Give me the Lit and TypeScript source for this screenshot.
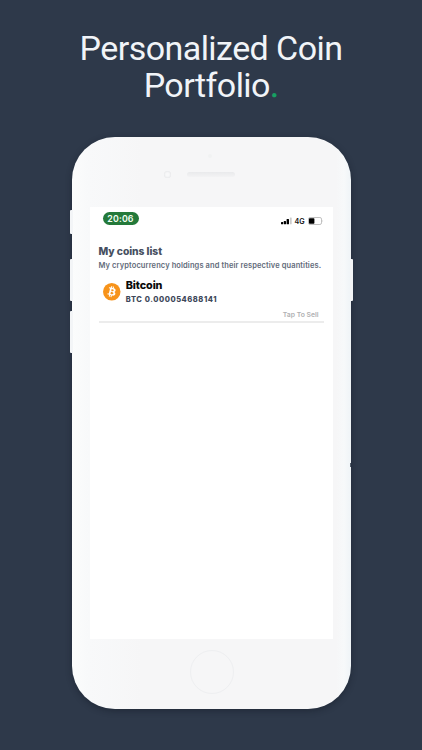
import { LitElement, html, css } from "lit";
import { customElement } from "lit/decorators.js";

@customElement("status-bar")
class StatusBar extends LitElement {
  static styles = css`
    :host { display: flex; justify-content: space-between; align-items: flex-start; padding: 5px 9px 0 13px; height: 14px; }
    .time { width: 36px; height: 13px; border-radius: 7px; background: #24793a; color: #f4fff5; font-size: 8.8px; line-height: 13px; font-weight: 600; text-align: center; letter-spacing: 0.15px; }
    .right { display: flex; align-items: center; height: 10px; margin-top: 4px; }
    .net { font-size: 7.2px; line-height: 10px; font-weight: 600; color: #111; margin: 0 2.5px 1px 3px; width: 10.5px; position: relative; top: 1px; }
    svg { display: block; }
  `;
  render() {
    return html`
      <div class="time">20:06</div>
      <div class="right">
        <svg width="11" height="8" viewBox="0 0 11 8">
          <rect x="0" y="4.9" width="2.2" height="2.3" rx=".5" fill="#000" />
          <rect x="2.8" y="3.9" width="2.2" height="3.3" rx=".5" fill="#000" />
          <rect x="5.6" y="2.1" width="2.4" height="5.1" rx=".5" fill="#000" />
          <rect x="8.9" y=".4" width="1.8" height="6.8" rx=".5" fill="#ccc" />
        </svg>
        <span class="net">4G</span>
        <svg width="16" height="8" viewBox="0 0 16 8">
          <rect x=".5" y=".5" width="13" height="7" rx="1.6" fill="#fff" stroke="#b0b0b0" stroke-width=".8" />
          <rect x="1" y="1.2" width="5.4" height="5.6" rx=".7" fill="#000" />
          <path d="M14.6 2.8q1 1.2 0 2.4z" fill="#aaa" />
        </svg>
      </div>`;
  }
}

@customElement("coin-row")
class CoinRow extends LitElement {
  static styles = css`
    :host { display: block; height: 50px; border-bottom: 2px solid #ececec; }
    .main { display: flex; padding: 8px 0 0 4px; height: 27px; }
    .logo { display: block; margin: 4px 5px 0 0.8px; flex: none; }
    .name { font-size: 10.8px; line-height: 14px; font-weight: 800; color: #0a0a0a; letter-spacing: -0.1px; }
    .qty { font-size: 7.5px; line-height: 12px; font-weight: 800; color: #3d4759; letter-spacing: 0.56px; white-space: nowrap; margin-top: 1px; }
    .sell { text-align: right; padding-right: 5px; font-size: 6.8px; line-height: 10px; font-weight: 600; color: #b0b0b2; margin-top: 4px; }
  `;
  render() {
    return html`
      <div class="main">
        <svg class="logo" width="17.5" height="17.5" viewBox="0 0 64 64">
          <circle cx="32" cy="32" r="32" fill="#f7931a" />
          <path fill="#fff" d="M46.1 27.4c.6-4.3-2.6-6.5-7-8l1.4-5.8-3.5-.9-1.4 5.6-2.8-.7 1.4-5.6-3.5-.9-1.4 5.8-7.1-1.8-.9 3.8s2.6.6 2.5.6c1.4.4 1.7 1.3 1.6 2l-3.9 15.8c-.2.4-.6 1.1-1.6.8l-2.6-.6-1.7 4 6.9 1.8-1.5 5.9 3.5.9 1.4-5.8 2.8.7-1.4 5.8 3.5.9 1.5-5.9c6 1.1 10.5.7 12.4-4.7 1.5-4.4-.1-6.9-3.2-8.5 2.3-.5 4-2 4.6-5.2zm-8 11.3c-1.1 4.4-8.5 2-10.9 1.4l1.9-7.8c2.4.6 10.1 1.8 9 6.4zm1.1-11.3c-1 4-7.2 2-9.1 1.5l1.7-7.1c2 .5 8.5 1.4 7.4 5.6z" />
        </svg>
        <div>
          <div class="name">Bitcoin</div>
          <div class="qty">BTC 0.000054688141</div>
        </div>
      </div>
      <div class="sell">Tap To Sell</div>`;
  }
}

@customElement("app-root")
class AppRoot extends LitElement {
  static styles = css`
    :host { display: flex; flex-direction: column; align-items: center; box-sizing: border-box; width: 422px; height: 750px; padding-top: 30px; overflow: hidden; background: #2e394a; font-family: Inter, "Liberation Sans", sans-serif; }
    .title { margin: 0; height: 107px; font: 400 34px/37px Roboto, sans-serif; letter-spacing: -0.55px; color: #f1f4f8; text-align: center; white-space: nowrap; }
    .dot { color: #16a163; -webkit-text-stroke: 0.5px #16a163; }
    .phone { position: relative; box-sizing: border-box; width: 279px; height: 572px; border-radius: 43px; padding: 0 17px 0 18px; background: linear-gradient(90deg, #fbfcfc 0, #f8f9fa 16px, #f6f6f7 70px, #f6f6f7 264px, #f7f9fa 272px, #eff4f7 100%); box-shadow: 0 2px 6px rgba(17, 24, 36, 0.45); }
    .key { position: absolute; width: 3px; background: #f3f5f7; }
    .left { left: -2px; border-radius: 1px 0 0 1px; }
    .right { right: -2px; border-radius: 0 1px 1px 0; }
    .mute { top: 73px; height: 24px; }
    .upper { top: 122px; height: 42px; }
    .lower { top: 174px; height: 42px; }
    .mark { position: absolute; right: 0; top: 326px; width: 1px; height: 4px; background: #56616e; }
    .top { display: flex; align-items: flex-start; height: 70px; }
    .camera { width: 7px; height: 7px; border-radius: 50%; margin: 34px 0 0 74px; background: #f8f8f9; box-shadow: inset 0 0 2px #d5d7da; }
    .speaker { width: 48px; height: 5px; margin: 35px 0 0 16px; border-radius: 3px; background: linear-gradient(#e9eaec, #f3f3f4); }
    .sensor { width: 4px; height: 4px; border-radius: 50%; background: #f1f2f3; margin: 17px 0 0 -27px; }
    .screen { width: 243px; height: 432px; background: #fff; }
    .content { padding: 19px 9px 0; }
    .heading { margin: 0; font-size: 10.3px; line-height: 13px; font-weight: 800; color: #464f60; white-space: nowrap; letter-spacing: -0.05px; }
    .sub { margin: 3px 0 0; font-size: 7.5px; line-height: 10px; font-weight: 600; color: #626b7a; white-space: nowrap; letter-spacing: 0.1px; }
    .home { width: 42px; height: 42px; margin: 11px auto 0; border: 1px solid #eeeff1; border-radius: 50%; }
  `;
  render() {
    return html`
      <h1 class="title">Personalized Coin<br />Portfolio<span class="dot">.</span></h1>
      <div class="phone">
        <i class="key left mute"></i>
        <i class="key left upper"></i>
        <i class="key left lower"></i>
        <i class="key right upper"></i>
        <i class="mark"></i>
        <div class="top">
          <div class="camera"></div>
          <div class="speaker"></div>
          <div class="sensor"></div>
        </div>
        <div class="screen">
          <status-bar></status-bar>
          <div class="content">
            <h2 class="heading">My coins list</h2>
            <p class="sub">My cryptocurrency holdings and their respective quantities.</p>
            <coin-row></coin-row>
          </div>
        </div>
        <div class="home"></div>
      </div>`;
  }
}
